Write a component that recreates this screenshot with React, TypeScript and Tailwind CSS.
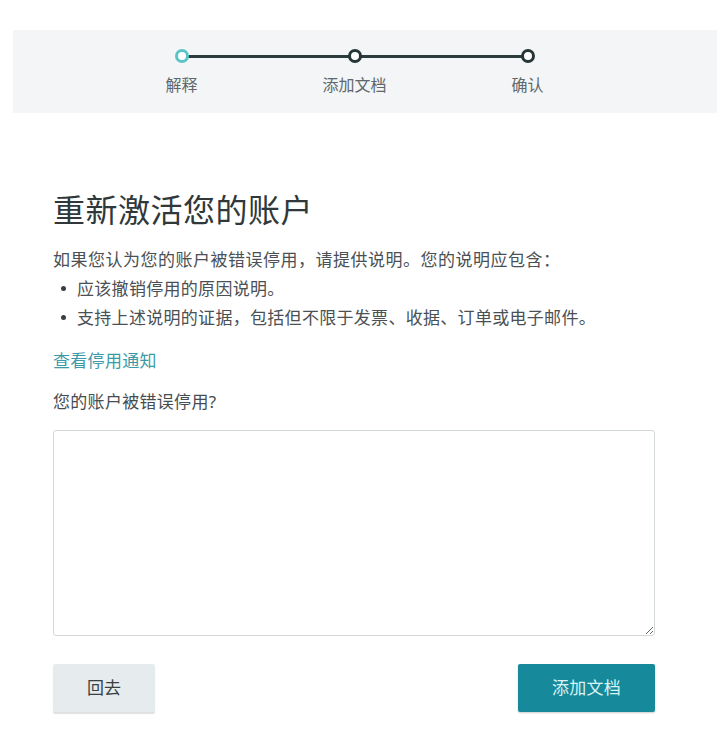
import { useState } from 'react';

const steps = ['解释', '添加文档', '确认'];

const Stepper = () => {
    return (
        <div className="relative ml-[82px] w-[519px] pt-[19px]">
            <div className="absolute left-[86px] right-[86px] top-[25px] h-[2.5px] bg-[#2c3b3b]"></div>
            <div className="flex">
                {steps.map((s, i) => (
                    <div key={s} className="w-[173px] flex flex-col items-center">
                        <div
                            className={
                                i === 0
                                    ? 'relative w-[14px] h-[14px] rounded-full border-[3px] border-[#5cc4c6] bg-white'
                                    : 'relative w-[14px] h-[14px] rounded-full border-[3px] border-[#263636] bg-white'
                            }
                        ></div>
                        <div className="mt-[12px] text-[16px] leading-[20px] text-[#60676b]">{s}</div>
                    </div>
                ))}
            </div>
        </div>
    );
};

const App = () => {
    const [text, setText] = useState('');
    return (
        <div
            className="w-[717px] h-[736px] bg-white pt-[30px] overflow-hidden"
            style={{ fontFamily: '"Noto Sans", "Noto Sans CJK SC", sans-serif' }}
        >
            <div className="ml-[13px] h-[83px] bg-[#f3f5f6]">
                <Stepper />
            </div>

            <div className="px-[53px] w-[708px]">
                <h1 className="mt-[77px] text-[32px] leading-[40px] text-[#30383a] tracking-[0.5px]">重新激活您的账户</h1>
                <p className="mt-[16px] text-[17px] leading-[28px] text-[#4a5053] tracking-[0.5px]">
                    如果您认为您的账户被错误停用，请提供说明。您的说明应包含：
                </p>
                <ul className="text-[17px] leading-[29px] text-[#4a5053] tracking-[0.3px]">
                    <li className="flex items-center">
                        <span className="ml-[8px] mr-[11px] w-[5px] h-[5px] rounded-full bg-[#3a4042]"></span>
                        应该撤销停用的原因说明。
                    </li>
                    <li className="flex items-center">
                        <span className="ml-[8px] mr-[11px] w-[5px] h-[5px] rounded-full bg-[#3a4042]"></span>
                        支持上述说明的证据，包括但不限于发票、收据、订单或电子邮件。
                    </li>
                </ul>
                <a href="#" className="block mt-[17px] text-[17px] leading-[24px] text-[#3b9aa8] tracking-[0.3px]">
                    查看停用通知
                </a>
                <label className="block mt-[17px] text-[17px] leading-[24px] text-[#464c4f] tracking-[0.3px]">
                    您的账户被错误停用?
                </label>
                <textarea
                    value={text}
                    onChange={(e) => setText(e.target.value)}
                    className="block mt-[16px] w-[602px] h-[206px] border border-[#d3d8da] rounded-[3px] bg-white outline-0 p-2 text-[16px]"
                ></textarea>
                <div className="mt-[28px] flex justify-between items-center w-[602px]">
                    <button className="w-[102px] h-[48px] bg-[#e6ebed] rounded-[2px] shadow-[0_2px_1px_rgba(0,0,0,0.12)] text-[17px] text-[#3a4042]">
                        回去
                    </button>
                    <button className="w-[137px] h-[48px] bg-[#168a9b] rounded-[2px] shadow-[0_1px_2px_rgba(0,0,0,0.2)] text-[17px] text-[#d9f3f6] tracking-[0.3px]">
                        添加文档
                    </button>
                </div>
            </div>
        </div>
    );
};

export default App;
